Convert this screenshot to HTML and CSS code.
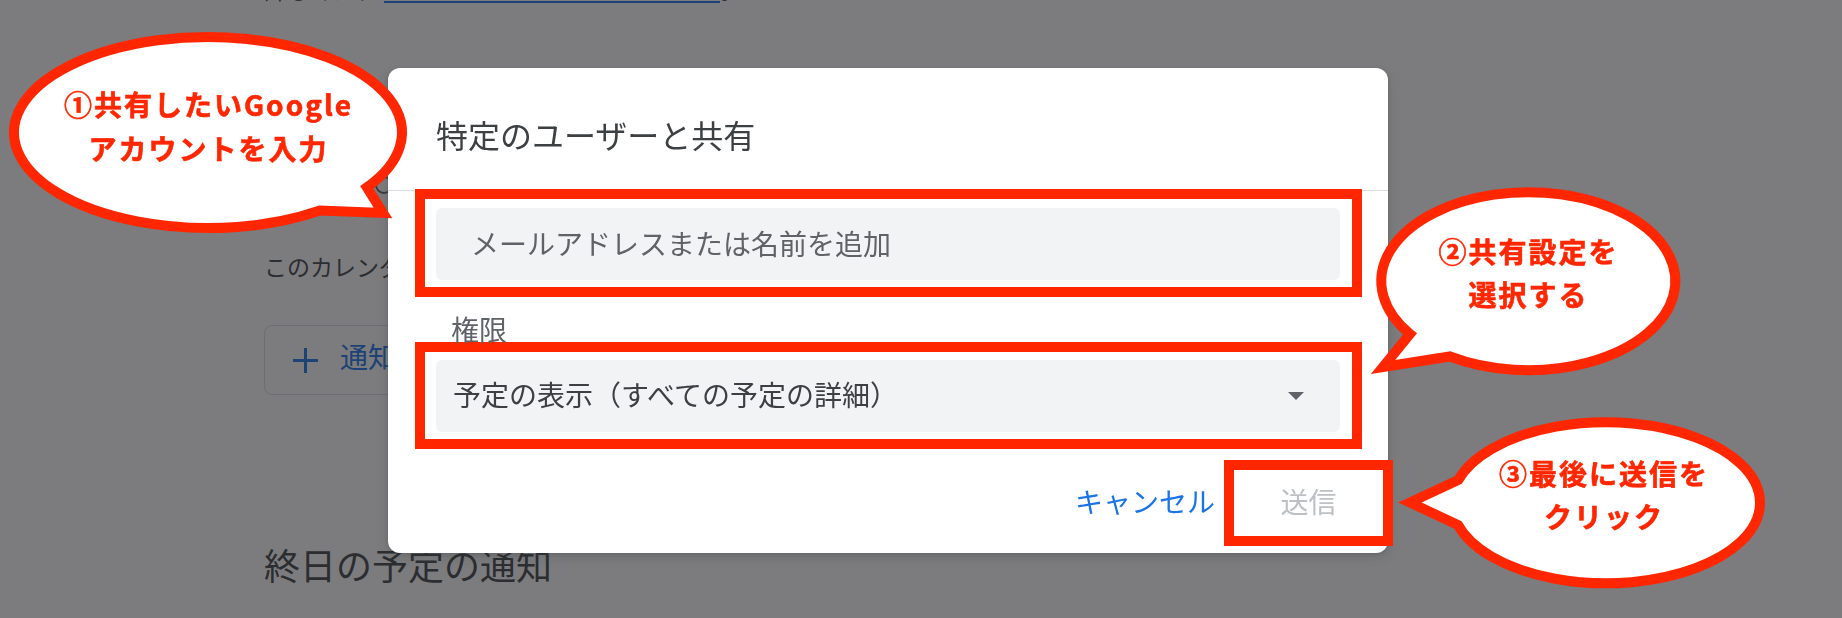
FILE: index.html
```html
<!DOCTYPE html>
<html lang="ja">
<head>
<meta charset="utf-8">
<title>特定のユーザーと共有</title>
<link rel="stylesheet" href="styles.css">
</head>
<body>
<main class="page">
  <div class="bg-top">
    <span class="bg-top-text">詳しくは、</span>
    <a class="bg-link" href="#">ヘルプセンターで詳細を確認</a>
    <span class="bg-top-rest">。</span>
  </div>
  <div class="bg-row">
    <span class="bg-row-text">権限の設定</span>
    <svg class="bg-help" width="18" height="18" viewBox="0 0 18 18"><circle cx="9" cy="9" r="8" fill="none" stroke="#5f6368" stroke-width="2"/></svg>
  </div>
  <p class="bg-desc">このカレンダーの</p>
  <button class="bg-add" type="button">
    <svg width="25" height="25" viewBox="0 0 25 25"><path d="M12.5 0V25M0 12.5H25" stroke="#1a73e8" stroke-width="3" fill="none"/></svg>
    <span class="bg-add-text">通知を追加</span>
  </button>
  <h2 class="bg-heading">終日の予定の通知</h2>
</main>

<div class="overlay">
  <section class="dialog">
    <header class="dialog-header">
      <h1 class="dialog-title">特定のユーザーと共有</h1>
    </header>
    <div class="dialog-body">
      <div class="hl hl-input">
        <div class="field field-input">メールアドレスまたは名前を追加</div>
      </div>
      <div class="field-label">権限</div>
      <div class="hl hl-select">
        <div class="field field-select">
          <span class="select-text">予定の表示（すべての予定の詳細）</span>
          <svg class="select-arrow" width="16" height="8" viewBox="0 0 16 8"><path d="M0 0H16L8 8Z" fill="#5f6368"/></svg>
        </div>
      </div>
      <div class="dialog-actions">
        <button class="btn btn-cancel" type="button">キャンセル</button>
        <button class="btn btn-send" type="button">送信</button>
      </div>
    </div>
  </section>
</div>

<div class="bubble bubble-1">
  <svg viewBox="0 20 420 230"><path d="M366.9 187.3A194 95.5 0 1 0 320 210.5L383 213Z"/></svg>
  <p class="bubble-text">①共有したいGoogle<br>アカウントを入力</p>
</div>
<div class="bubble bubble-2">
  <svg viewBox="1360 180 330 200"><path d="M1450 356.5A147 89 0 1 0 1410 334L1383 367Z"/></svg>
  <p class="bubble-text">②共有設定を<br>選択する</p>
</div>
<div class="bubble bubble-3">
  <svg viewBox="1390 410 390 185"><path d="M1458.3 480A154 80.5 0 1 1 1458 525L1410 502.5Z"/></svg>
  <p class="bubble-text">③最後に送信を<br>クリック</p>
</div>
</body>
</html>
```

FILE: styles.css
```css
html, body {
  margin: 0;
  padding: 0;
}

body {
  width: 1842px;
  height: 618px;
  overflow: hidden;
  position: relative;
  background: #ffffff;
  font-family: "Noto Sans CJK JP", "Noto Sans", sans-serif;
  color: #3c4043;
}

/* ---------- background page ---------- */
.page {
  padding-left: 264px;
}

.bg-top {
  height: 3px;
  overflow: hidden;
  display: flex;
  align-items: flex-end;
  font-size: 23px;
  line-height: 28px;
}

.bg-top > * {
  flex: none;
  white-space: nowrap;
  overflow: hidden;
}

.bg-top-text {
  width: 120px;
}

.bg-link {
  width: 336px;
  color: #1a73e8;
  text-decoration: none;
  border-bottom: 2px solid #1a73e8;
}

.bg-row {
  margin-top: 172px;
  height: 20px;
  display: flex;
  align-items: center;
  gap: 6px;
  font-size: 18px;
}

.bg-row-text {
  flex: none;
  width: 105px;
  overflow: hidden;
  white-space: nowrap;
}

.bg-help {
  flex: none;
}

.bg-desc {
  margin: 55px 0 0;
  font-size: 23px;
  line-height: 32px;
  white-space: nowrap;
}

.bg-add {
  display: flex;
  align-items: center;
  gap: 22px;
  height: 70px;
  box-sizing: border-box;
  margin: 43px 0 0;
  padding: 0 40px 0 28px;
  border: 1px solid #dadce0;
  border-radius: 8px;
  background: #ffffff;
  font-family: inherit;
  font-size: 28px;
  color: #1a73e8;
}

.bg-add-text {
  padding-bottom: 8px;
  line-height: 36px;
}

.bg-heading {
  margin: 147px 0 0;
  font-size: 36px;
  line-height: 44px;
  font-weight: 400;
}

/* ---------- scrim + dialog ---------- */
.overlay {
  position: fixed;
  inset: 0;
  box-sizing: border-box;
  padding: 68px 0 0 388px;
  background: rgba(32, 33, 36, 0.59);
}

.dialog {
  width: 1000px;
  box-sizing: border-box;
  padding-bottom: 7px;
  background: #ffffff;
  border-radius: 12px;
  box-shadow: 0 1px 3px rgba(60, 64, 67, 0.3), 0 4px 8px 3px rgba(60, 64, 67, 0.15);
}

.dialog-header {
  padding: 46px 48px 36px;
  border-bottom: 1px solid #dadce0;
}

.dialog-title {
  margin: 0;
  font-size: 32px;
  line-height: 40px;
  font-weight: 400;
  color: #3c4043;
}

.dialog-body {
  padding: 0 26px 0 27px;
}

.hl {
  border: 10px solid #ff2600;
}

.hl-input {
  margin-top: -2px;
  padding: 9px 12px 7px 11px;
}

.hl-select {
  margin-top: -1px;
  padding: 8px 12px 7px 11px;
}

.field {
  height: 72px;
  box-sizing: border-box;
  display: flex;
  align-items: center;
  background: #f1f3f4;
  border-radius: 6px;
  font-size: 28px;
  line-height: 36px;
}

.field-input {
  padding: 0 0 3px 35px;
  color: #5f6368;
}

.field-select {
  justify-content: space-between;
  padding: 0 36px 0 17px;
  color: #3c4043;
}

.select-text {
  padding-bottom: 4px;
}

.select-arrow {
  flex: none;
}

.field-label {
  margin-top: 18px;
  padding-left: 36px;
  font-size: 28px;
  line-height: 28px;
  color: #5f6368;
}

.dialog-actions {
  display: flex;
  justify-content: flex-end;
  align-items: center;
  margin: 11px -31px 0 0;
}

.btn {
  border: none;
  background: none;
  padding: 0;
  margin: 0;
  font-family: inherit;
  font-size: 28px;
  line-height: 36px;
}

.btn-cancel {
  margin-right: 9px;
  padding-bottom: 4px;
  color: #1a73e8;
}

.btn-send {
  width: 169px;
  height: 86px;
  box-sizing: border-box;
  display: flex;
  align-items: center;
  justify-content: center;
  padding-bottom: 4px;
  border: 10px solid #ff2600;
  color: #bdc1c6;
}

/* ---------- annotation bubbles ---------- */
.bubble {
  position: absolute;
  display: grid;
}

.bubble > * {
  grid-area: 1 / 1;
}

.bubble svg {
  display: block;
  width: 100%;
  height: 100%;
  overflow: visible;
}

.bubble path {
  fill: #ffffff;
  stroke: #ff2600;
  stroke-width: 10;
  stroke-linejoin: miter;
  stroke-miterlimit: 10;
}

.bubble-text {
  margin: 0;
  color: #ff2600;
  font-weight: 700;
  font-size: 28px;
  letter-spacing: 2px;
  text-align: center;
  -webkit-text-stroke: 0.6px #ff2600;
}

.bubble-1 {
  left: 0;
  top: 20px;
  width: 420px;
  height: 230px;
}

.bubble-1 .bubble-text {
  padding: 62px 3px 0 0;
  line-height: 44px;
}

.bubble-2 {
  left: 1360px;
  top: 180px;
  width: 330px;
  height: 200px;
}

.bubble-2 .bubble-text {
  padding: 49.5px 0 0 7px;
  line-height: 43px;
}

.bubble-3 {
  left: 1390px;
  top: 410px;
  width: 390px;
  height: 185px;
}

.bubble-3 .bubble-text {
  padding: 41.5px 0 0 38px;
  line-height: 43px;
}
```
